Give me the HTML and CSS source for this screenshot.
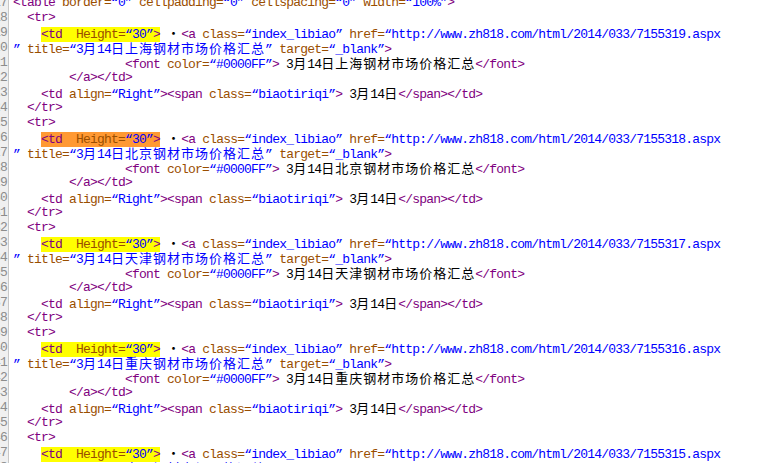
FILE: index.html
```
<!DOCTYPE html>
<html>
<head>
<meta charset="utf-8">
<link rel="stylesheet" href="styles.css">
</head>
<body>
<div class="editor">
<div class="gutter">
<div class="n">17</div><div class="n">18</div><div class="n">19</div><div class="n">20</div><div class="n">21</div><div class="n">22</div><div class="n">23</div><div class="n">24</div><div class="n">25</div><div class="n">26</div><div class="n">27</div><div class="n">28</div><div class="n">29</div><div class="n">30</div><div class="n">31</div><div class="n">32</div><div class="n">33</div><div class="n">34</div><div class="n">35</div><div class="n">36</div><div class="n">37</div><div class="n">38</div><div class="n">39</div><div class="n">40</div><div class="n">41</div><div class="n">42</div><div class="n">43</div><div class="n">44</div><div class="n">45</div><div class="n">46</div><div class="n">47</div><div class="n">48</div><div class="n">49</div>
</div>
<div class="code">
<div class="l"><span class="t">&lt;table</span> <span class="a">border=</span><span class="v">“0”</span> <span class="a">cellpadding=</span><span class="v">“0”</span> <span class="a">cellspacing=</span><span class="v">“0”</span> <span class="a">width=</span><span class="v">“100%”</span><span class="t">&gt;</span></div>

<div class="l">  <span class="t">&lt;tr&gt;</span></div>
<div class="l">    <span class="hy"><span class="t">&lt;td</span>  <span class="a">Height=</span><span class="v">“30”</span><span class="t">&gt;</span></span> <span class="c dot">・</span><span class="t">&lt;a</span> <span class="a">class=</span><span class="v">“index_libiao”</span> <span class="a">href=</span><span class="v">“http://www.zh818.com/html/2014/033/7155319.aspx</span></div>
<div class="l"><span class="v">”</span> <span class="a">title=</span><span class="v">“3<span class="c">月</span>14<span class="c">日上海钢材市场价格汇总</span>”</span> <span class="a">target=</span><span class="v">“_blank”</span><span class="t">&gt;</span></div>
<div class="l">                <span class="t">&lt;font</span> <span class="a">color=</span><span class="v">“#0000FF”</span><span class="t">&gt;</span> 3<span class="c">月</span>14<span class="c">日上海钢材市场价格汇总</span><span class="t">&lt;/font&gt;</span></div>
<div class="l">        <span class="t">&lt;/a&gt;&lt;/td&gt;</span></div>
<div class="l">    <span class="t">&lt;td</span> <span class="a">align=</span><span class="v">“Right”</span><span class="t">&gt;&lt;span</span> <span class="a">class=</span><span class="v">“biaotiriqi”</span><span class="t">&gt;</span> 3<span class="c">月</span>14<span class="c">日</span><span class="t">&lt;/span&gt;&lt;/td&gt;</span></div>
<div class="l">  <span class="t">&lt;/tr&gt;</span></div>

<div class="l">  <span class="t">&lt;tr&gt;</span></div>
<div class="l">    <span class="ho"><span class="t">&lt;td</span>  <span class="a">Height=</span><span class="v">“30”</span><span class="t">&gt;</span></span> <span class="c dot">・</span><span class="t">&lt;a</span> <span class="a">class=</span><span class="v">“index_libiao”</span> <span class="a">href=</span><span class="v">“http://www.zh818.com/html/2014/033/7155318.aspx</span></div>
<div class="l"><span class="v">”</span> <span class="a">title=</span><span class="v">“3<span class="c">月</span>14<span class="c">日北京钢材市场价格汇总</span>”</span> <span class="a">target=</span><span class="v">“_blank”</span><span class="t">&gt;</span></div>
<div class="l">                <span class="t">&lt;font</span> <span class="a">color=</span><span class="v">“#0000FF”</span><span class="t">&gt;</span> 3<span class="c">月</span>14<span class="c">日北京钢材市场价格汇总</span><span class="t">&lt;/font&gt;</span></div>
<div class="l">        <span class="t">&lt;/a&gt;&lt;/td&gt;</span></div>
<div class="l">    <span class="t">&lt;td</span> <span class="a">align=</span><span class="v">“Right”</span><span class="t">&gt;&lt;span</span> <span class="a">class=</span><span class="v">“biaotiriqi”</span><span class="t">&gt;</span> 3<span class="c">月</span>14<span class="c">日</span><span class="t">&lt;/span&gt;&lt;/td&gt;</span></div>
<div class="l">  <span class="t">&lt;/tr&gt;</span></div>

<div class="l">  <span class="t">&lt;tr&gt;</span></div>
<div class="l">    <span class="hy"><span class="t">&lt;td</span>  <span class="a">Height=</span><span class="v">“30”</span><span class="t">&gt;</span></span> <span class="c dot">・</span><span class="t">&lt;a</span> <span class="a">class=</span><span class="v">“index_libiao”</span> <span class="a">href=</span><span class="v">“http://www.zh818.com/html/2014/033/7155317.aspx</span></div>
<div class="l"><span class="v">”</span> <span class="a">title=</span><span class="v">“3<span class="c">月</span>14<span class="c">日天津钢材市场价格汇总</span>”</span> <span class="a">target=</span><span class="v">“_blank”</span><span class="t">&gt;</span></div>
<div class="l">                <span class="t">&lt;font</span> <span class="a">color=</span><span class="v">“#0000FF”</span><span class="t">&gt;</span> 3<span class="c">月</span>14<span class="c">日天津钢材市场价格汇总</span><span class="t">&lt;/font&gt;</span></div>
<div class="l">        <span class="t">&lt;/a&gt;&lt;/td&gt;</span></div>
<div class="l">    <span class="t">&lt;td</span> <span class="a">align=</span><span class="v">“Right”</span><span class="t">&gt;&lt;span</span> <span class="a">class=</span><span class="v">“biaotiriqi”</span><span class="t">&gt;</span> 3<span class="c">月</span>14<span class="c">日</span><span class="t">&lt;/span&gt;&lt;/td&gt;</span></div>
<div class="l">  <span class="t">&lt;/tr&gt;</span></div>

<div class="l">  <span class="t">&lt;tr&gt;</span></div>
<div class="l">    <span class="hy"><span class="t">&lt;td</span>  <span class="a">Height=</span><span class="v">“30”</span><span class="t">&gt;</span></span> <span class="c dot">・</span><span class="t">&lt;a</span> <span class="a">class=</span><span class="v">“index_libiao”</span> <span class="a">href=</span><span class="v">“http://www.zh818.com/html/2014/033/7155316.aspx</span></div>
<div class="l"><span class="v">”</span> <span class="a">title=</span><span class="v">“3<span class="c">月</span>14<span class="c">日重庆钢材市场价格汇总</span>”</span> <span class="a">target=</span><span class="v">“_blank”</span><span class="t">&gt;</span></div>
<div class="l">                <span class="t">&lt;font</span> <span class="a">color=</span><span class="v">“#0000FF”</span><span class="t">&gt;</span> 3<span class="c">月</span>14<span class="c">日重庆钢材市场价格汇总</span><span class="t">&lt;/font&gt;</span></div>
<div class="l">        <span class="t">&lt;/a&gt;&lt;/td&gt;</span></div>
<div class="l">    <span class="t">&lt;td</span> <span class="a">align=</span><span class="v">“Right”</span><span class="t">&gt;&lt;span</span> <span class="a">class=</span><span class="v">“biaotiriqi”</span><span class="t">&gt;</span> 3<span class="c">月</span>14<span class="c">日</span><span class="t">&lt;/span&gt;&lt;/td&gt;</span></div>
<div class="l">  <span class="t">&lt;/tr&gt;</span></div>

<div class="l">  <span class="t">&lt;tr&gt;</span></div>
<div class="l">    <span class="hy"><span class="t">&lt;td</span>  <span class="a">Height=</span><span class="v">“30”</span><span class="t">&gt;</span></span> <span class="c dot">・</span><span class="t">&lt;a</span> <span class="a">class=</span><span class="v">“index_libiao”</span> <span class="a">href=</span><span class="v">“http://www.zh818.com/html/2014/033/7155315.aspx</span></div>
<div class="l"><span class="v">”</span> <span class="a">title=</span><span class="v">“3<span class="c">月</span>14<span class="c">日广州钢材市场价格汇总</span>”</span> <span class="a">target=</span><span class="v">“_blank”</span><span class="t">&gt;</span></div>
</div>
</div>
</body>
</html>
```

FILE: styles.css
```
html, body {
  margin: 0;
  padding: 0;
  background: #ffffff;
}
body {
  width: 768px;
  height: 463px;
  overflow: hidden;
}
.editor {
  display: flex;
  align-items: flex-start;
  margin-top: -5px;
  font-family: "Liberation Mono", monospace;
  font-size: 13px;
  letter-spacing: -0.8px;
  line-height: 15px;
  color: #000000;
}
.gutter {
  flex: none;
  width: 36px;
  margin-left: -29px;
  padding-right: 1px;
  background: #f0f0f0;
  border-right: 1px solid #c8c8c8;
  color: #8c8c8c;
  text-align: right;
  min-height: 480px;
}
.n {
  height: 15px;
  white-space: pre;
}
.code {
  flex: 1;
  padding-left: 4px;
}
.l {
  height: 15px;
  white-space: pre;
  overflow: visible;
}
.t { color: #800080; }
.a { color: #9a4e00; }
.v { color: #0000ff; }
.c {
  font-family: "Noto Sans CJK SC", sans-serif;
  letter-spacing: 1px;
}
.dot {
  color: #000000;
  font-weight: normal;
}
.hy { background: #ffff00; }
.ho { background: #ff9933; }
```
